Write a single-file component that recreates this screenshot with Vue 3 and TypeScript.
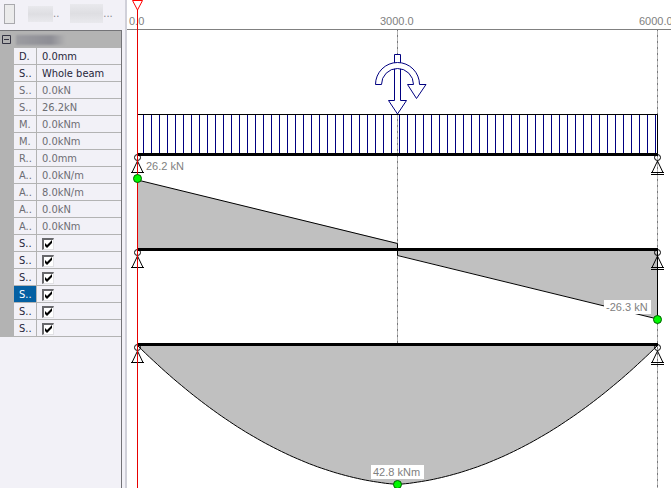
<script setup lang="ts">
interface Row {
  name: string
  value?: string
  editable?: boolean
  selected?: boolean
}

const rows: Row[] = [
  { name: 'D.', value: '0.0mm', editable: true },
  { name: 'S..', value: 'Whole beam', editable: true },
  { name: 'S..', value: '0.0kN' },
  { name: 'S..', value: '26.2kN' },
  { name: 'M.', value: '0.0kNm' },
  { name: 'M.', value: '0.0kNm' },
  { name: 'R..', value: '0.0mm' },
  { name: 'A..', value: '0.0kN/m' },
  { name: 'A..', value: '8.0kN/m' },
  { name: 'A..', value: '0.0kN' },
  { name: 'A..', value: '0.0kNm' },
  { name: 'S..', editable: true },
  { name: 'S..', editable: true },
  { name: 'S..', editable: true },
  { name: 'S..', editable: true, selected: true },
  { name: 'S..', editable: true },
  { name: 'S..', editable: true },
]

const beams = [154, 249, 344]
const loadLines = Array.from({ length: 65 }, (_, i) => 16.5 + i * 8)

// Bending moment of the uniform load plus the point load at midspan.
const momentPoints = Array.from({ length: 131 }, (_, i) => {
  const metres = (i * 6) / 130
  const d = Math.min(metres, 6 - metres)
  const moment = 26.2 * d - 4 * d * d
  return `${10.5 + i * 4},${(345.5 + (moment * 139) / 42.6).toFixed(1)}`
}).join(' ')
</script>

<template>
  <div class="app">
    <aside class="side">
      <div class="toolbar">
        <button class="tool swatch" type="button" aria-label="Colour"></button>
        <button class="tool first" type="button"><span class="smudge"></span>..</button>
        <button class="tool second" type="button"><span class="smudge wide"></span>...</button>
      </div>
      <div class="grid">
        <div class="group">
          <button class="toggle" type="button" aria-label="Collapse">
            <svg width="9" height="9" viewBox="0 0 9 9">
              <path d="M.5.5h8v8h-8zM2 4.5h5" fill="none" stroke="#333342" />
            </svg>
          </button>
          <span class="title"></span>
        </div>
        <table class="props">
          <tbody>
            <tr v-for="(row, i) in rows" :key="i" :class="{ editable: row.editable }">
              <th scope="row" :class="{ selected: row.selected }">
                <label v-if="!row.value" :for="`check-${i}`">{{ row.name }}</label>
                <template v-else>{{ row.name }}</template>
              </th>
              <td>
                <template v-if="row.value">{{ row.value }}</template>
                <span v-else class="check">
                  <input :id="`check-${i}`" type="checkbox" checked />
                  <svg class="tick" width="12" height="12" viewBox="0 0 12 12">
                    <path d="M3 5v3l2 2 5-5V2L5 7z" fill="#000" />
                  </svg>
                </span>
              </td>
            </tr>
          </tbody>
        </table>
      </div>
    </aside>

    <main class="canvas">
      <svg class="drawing" viewBox="0 0 544 488">
        <path class="guide" d="M270.5 29V488M530.5 29V488" />
        <path class="guide dashes" d="M270.5 29V488M530.5 29V488" />
        <path class="ruler" d="M0 29.5H544" />

        <g class="fill">
          <path d="M10 180L270 243V249H10z" />
          <path d="M270 249V255L531 319V249z" />
          <polygon :points="momentPoints" />
        </g>

        <path v-for="x in loadLines" :key="x" class="load" :d="`M${x} 115V153`" />
        <path class="outline" d="M10 114.5H530.5V153" />

        <g class="outline">
          <path d="M10.5 180L270.5 243.5V255.5L530.5 319V249" />
          <polyline :points="momentPoints" />
        </g>

        <g v-for="y in beams" :key="y">
          <path class="beam" :d="`M10 ${y + 0.5}H531`" />
          <g class="support">
            <circle cx="10.5" :cy="y + 3.5" r="3" />
            <path :d="`M10.5 ${y + 7}L5 ${y + 18.5}H16zM4 ${y + 18.5}H17`" />
            <circle cx="530.5" :cy="y + 3.5" r="3" />
            <path :d="`M530.5 ${y + 7}L525 ${y + 18.5}H536zM524 ${y + 18.5}H537M524 ${y + 20.5}H537`" />
          </g>
        </g>

        <g class="symbol">
          <path d="M267.5 54.5h6v46h6L270.5 114L261.5 100.5h6z" />
          <path d="M248.5 84.5A22 22 0 0 1 292.5 84.5H299L289.5 98.5L280.5 84.5H286.5A16 16 0 0 0 254.5 84.5z" />
        </g>

        <path class="cursor" d="M10.5 10V488" />
        <path class="marker" d="M5.5.5h10L10.5 10z" />

        <circle class="node" cx="10.5" cy="178.5" r="4" />
        <circle class="node" cx="530.5" cy="319.5" r="4" />
        <circle class="node" cx="270.5" cy="484.5" r="4" />

        <rect class="plate" x="477" y="300" width="47" height="14" />
        <rect class="plate" x="244" y="465" width="53" height="14" />

        <g class="label">
          <text x="2" y="25">0.0</text>
          <text x="253" y="25">3000.0</text>
          <text x="512" y="25">6000.0</text>
          <text x="19" y="170">26.2 kN</text>
          <text x="479" y="311">-26.3 kN</text>
          <text x="246" y="476">42.8 kNm</text>
        </g>
      </svg>
    </main>
  </div>
</template>

<style>
body {
  margin: 0;
  overflow: hidden;
  background: #f2f1f7;
}
</style>

<style scoped>
.app {
  display: flex;
  min-height: 100vh;
  font: 11px/14px "DejaVu Sans Condensed", "DejaVu Sans", sans-serif;
  color: #27273b;
}

.side {
  flex: none;
  box-sizing: border-box;
  width: 127px;
  padding-right: 3px;
  border-right: 2px solid #d0d0d9;
}

.toolbar {
  display: flex;
  align-items: center;
  height: 27px;
  padding: 0 4px 3px;
}

.tool {
  display: flex;
  align-items: center;
  padding: 0;
  border: 0;
  background: none;
  font: inherit;
  color: #85858d;
}

.swatch {
  width: 11px;
  height: 20px;
  border: 1px solid #a9a9ad;
  background: #ebebeb;
}

.first {
  margin-left: 13px;
}

.second {
  margin-left: 11px;
}

.smudge {
  width: 25px;
  height: 16px;
  background: linear-gradient(#e9e9ed, #dedee2, #e9e9ed);
}

.wide {
  width: 33px;
  height: 19px;
}

.grid {
  border-top: 1px solid #737377;
  border-right: 1px solid #737377;
  min-height: calc(100vh - 31px);
}

.group {
  display: flex;
  align-items: center;
  gap: 5px;
  height: 17px;
  padding-left: 2px;
  background: #b3b3b3;
}

.toggle {
  display: flex;
  padding: 0;
  border: 0;
  background: none;
}

.title {
  width: 50px;
  height: 10px;
  background: linear-gradient(90deg, #9c9ca1, #8e8e95 70%, #b3b3b3);
  filter: blur(1px);
}

.props {
  width: 100%;
  border-collapse: separate;
  border-spacing: 0;
  border-left: 14px solid #b3b3b3;
  table-layout: fixed;
}

.props th,
.props td {
  height: 14px;
  padding: 2px 0 0 5px;
  border-bottom: 1px solid #b3b3b3;
  font-weight: normal;
  text-align: left;
  white-space: nowrap;
  color: #6d6d73;
}

.props th {
  width: 17px;
  border-right: 1px solid #b3b3b3;
}

.props .editable th,
.props .editable td {
  color: #27273b;
}

.props .editable .selected {
  background: #0460a3;
  color: #fff;
}

.check {
  display: grid;
  width: 12px;
  height: 12px;
}

.check input,
.tick {
  grid-area: 1 / 1;
}

.check input {
  appearance: none;
  box-sizing: border-box;
  width: 12px;
  height: 12px;
  margin: 0;
  border: solid;
  border-width: 2px 1px 1px 2px;
  border-color: #68686c #e2e2e5 #e2e2e5 #68686c;
  background: #fff;
}

.tick {
  pointer-events: none;
}

.canvas {
  flex: 1;
  min-width: 0;
  background: #fff;
}

.drawing {
  display: block;
  width: 100%;
}

.fill {
  fill: #c0c0c0;
}

.guide {
  stroke: #b4b4b4;
}

.dashes {
  stroke: #77777a;
  stroke-dasharray: 2 4;
}

.ruler {
  stroke: #808080;
}

.load {
  stroke: #000080;
}

.outline {
  fill: none;
  stroke: #000;
}

.beam {
  stroke: #000;
  stroke-width: 3;
}

.support {
  fill: none;
  stroke: #000;
}

.symbol {
  fill: #fff;
  stroke: #000080;
}

.cursor {
  stroke: #e80000;
}

.marker {
  fill: #fff;
  stroke: #f00;
}

.node {
  fill: #00f800;
  stroke: #006000;
}

.plate {
  fill: #fff;
}

.label {
  font: 11px "Liberation Sans", Arial, sans-serif;
  fill: #808080;
}
</style>
